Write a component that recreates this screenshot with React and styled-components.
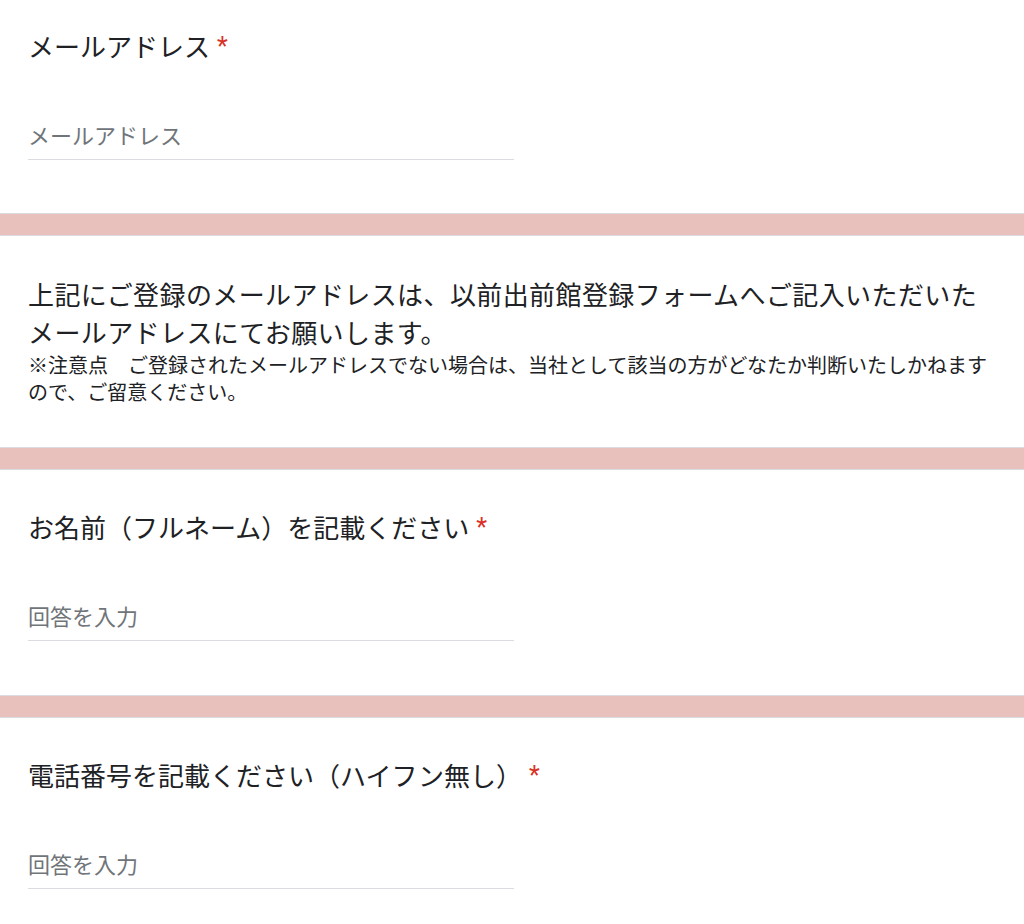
import React from "react";
import styled, { createGlobalStyle } from "styled-components";

const GlobalStyle = createGlobalStyle`
  html, body {
    margin: 0;
    padding: 0;
    background: #e8c1bc;
  }
  body {
    font-family: "Noto Sans CJK JP", "Noto Sans", sans-serif;
    color: #202124;
  }
  * { box-sizing: border-box; }
`;

const Page = styled.div`
  display: flex;
  flex-direction: column;
  gap: 21px;
  width: 1024px;
  min-height: 924px;
  background: #e8c1bc;
`;

const Card = styled.section`
  background: #ffffff;
  border-top: ${(p) => (p.$first ? "none" : "1px solid #dadce0")};
  border-bottom: 1px solid #dadce0;
  padding: ${(p) => (p.$first ? "28px" : "39px")} 28px ${(p) => (p.$last ? "120px" : p.$first ? "53px" : "54px")} 28px;
  display: flex;
  flex-direction: column;
`;

const TextCard = styled(Card)`
  padding: 39px 28px 42px 28px;
`;

const Title = styled.div`
  font-size: 26px;
  line-height: 36px;
  color: #202124;
  white-space: nowrap;
`;

const Required = styled.span`
  font-family: Roboto, "Liberation Sans", sans-serif;
  color: #d93025;
  font-size: 25px;
  margin-left: 7px;
  vertical-align: 2px;
`;

const Field = styled.input`
  margin-top: 53px;
  width: 486px;
  height: 42px;
  padding: 0 0 9px 0;
  border: none;
  border-bottom: 1px solid #dadce0;
  background: transparent;
  outline: none;
  font-family: "Noto Sans CJK JP", "Noto Sans", sans-serif;
  font-size: 22px;
  line-height: 32px;
  color: #202124;

  &::placeholder {
    color: #70757a;
    opacity: 1;
  }
`;

const Lead = styled.p`
  margin: 0;
  font-size: 26px;
  line-height: 38px;
  letter-spacing: 0.4px;
  color: #202124;
`;

const Note = styled.p`
  margin: 0;
  font-size: 20px;
  line-height: 27px;
  color: #202124;
`;

function Question({ label, placeholder, first, last }) {
  return (
    <Card $first={first} $last={last}>
      <Title>
        {label}
        <Required>*</Required>
      </Title>
      <Field type="text" placeholder={placeholder} />
    </Card>
  );
}

export default function App() {
  return (
    <>
      <GlobalStyle />
      <Page>
        <Question first label="メールアドレス" placeholder="メールアドレス" />
        <TextCard>
          <Lead>
            上記にご登録のメールアドレスは、以前出前館登録フォームへご記入いただいたメールアドレスにてお願いします。
          </Lead>
          <Note>
            ※注意点　ご登録されたメールアドレスでない場合は、当社として該当の方がどなたか判断いたしかねますので、ご留意ください。
          </Note>
        </TextCard>
        <Question label="お名前（フルネーム）を記載ください" placeholder="回答を入力" />
        <Question last label="電話番号を記載ください（ハイフン無し）" placeholder="回答を入力" />
      </Page>
    </>
  );
}
